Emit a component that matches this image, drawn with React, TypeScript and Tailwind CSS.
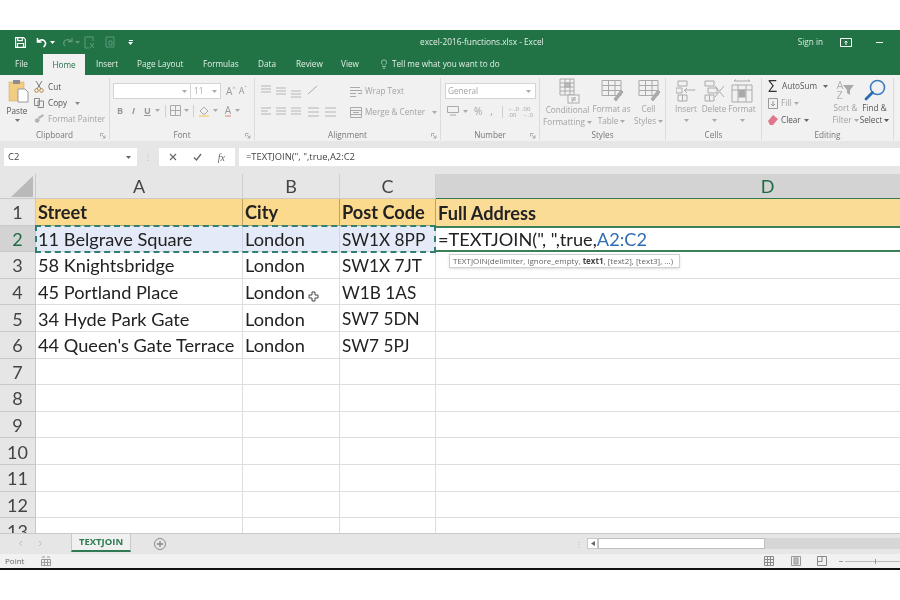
import { ReactNode } from 'react'
import { Lightbulb } from 'lucide-react'

const uiFont = 'font-["Open_Sans",sans-serif]'
const cellFont = 'font-["Lato",sans-serif]'

const rows: string[][] = [
  ['Street', 'City', 'Post Code', 'Full Address'],
  ['11 Belgrave Square', 'London', 'SW1X 8PP', '=TEXTJOIN'],
  ['58 Knightsbridge', 'London', 'SW1X 7JT', ''],
  ['45 Portland Place', 'London', 'W1B 1AS', ''],
  ['34 Hyde Park Gate', 'London', 'SW7 5DN', ''],
  ["44 Queen's Gate Terrace", 'London', 'SW7 5PJ', ''],
  ['', '', '', ''],
  ['', '', '', ''],
  ['', '', '', ''],
  ['', '', '', ''],
  ['', '', '', ''],
  ['', '', '', ''],
  ['', '', '', ''],
]

function Caret({ className = 'text-[#8a8a8a]' }: { className?: string }) {
  return (
    <svg width="5" height="3" viewBox="0 0 5 3" className={`shrink-0 ${className}`}>
      <path d="M0 0h5L2.500 3z" fill="currentColor" />
    </svg>
  )
}

function Group({ width, label, launcher, children }: { width: string; label: string; launcher?: boolean; children: ReactNode }) {
  return (
    <div className={`${width} flex flex-col border-r border-[#dcdcdc] h-[62px] relative`}>
      <div className="flex-1 flex min-h-0">{children}</div>
      <div className="h-[14px] text-[8.200px] leading-[18px] text-center text-[#777]">{label}</div>
      {launcher && (
        <svg width="6" height="6" viewBox="0 0 6 6" className="absolute right-[3px] bottom-[1px] text-[#999]">
          <path d="M.5.5h3M.5.5v3M2 2l3 3M5 2.500V5H2.500" stroke="currentColor" strokeWidth="0.8" fill="none" />
        </svg>
      )}
    </div>
  )
}

// the big two line ribbon buttons in Styles and Cells, caret marks a dropdown line
function BigButton({ width, icon, lines, dark }: { width: string; icon: ReactNode; lines: string[]; dark?: boolean }) {
  return (
    <div className={`${width} flex flex-col items-center text-[8.200px] leading-[12px] ${dark ? 'text-[#555]' : 'text-[#a3a3a3]'}`}>
      <div className="h-[28px] flex items-center justify-center">{icon}</div>
      {lines.map((l) => (
        <div key={l} className="h-[12px] whitespace-nowrap flex items-center gap-[2px]">
          {l.replace('^', '')}
          {l.endsWith('^') && <Caret className={dark ? 'text-[#555]' : 'text-[#aaa]'} />}
        </div>
      ))}
    </div>
  )
}

function TableIcon({ children }: { children?: ReactNode }) {
  return (
    <svg width="26" height="25" viewBox="0 0 26 25" fill="none" stroke="#a9a9a9" strokeWidth="1">
      <path d="M3 2.500h19v15H3zM3 7.500h19M3 12.500h19M9.500 2.500v15M16 2.500v15" />
      {children}
    </svg>
  )
}

function Sheet() {
  return (
    <div className="h-[359px] relative overflow-hidden bg-white">
      {/* column D runs past the window edge, that is why its letter sits so far right */}
      <div className={`grid grid-cols-[36px_207px_97px_96px_664px] grid-rows-[25px] auto-rows-[26.600px] w-[1100px] ${cellFont}`}>
        {/* column headers */}
        <div className="bg-[#e6e6e6] border-r border-b border-[#c9c9c9] flex items-end justify-end pr-[2px] pb-[1px]">
          <svg width="22" height="21" viewBox="0 0 22 21"><path d="M22 0v21H0z" fill="#b9b9b9" /></svg>
        </div>
        {['A', 'B', 'C', 'D'].map((c) => (
          <div
            key={c}
            className={`flex items-center justify-center text-[18px] pt-[1px] border-r border-[#cfcfcf] ${
              c === 'D' ? 'bg-[#d3d3d3] text-[#1f6b44] border-b border-b-[#2f7a52]' : 'bg-[#e6e6e6] text-[#444] border-b border-b-[#c9c9c9]'
            }`}
          >
            {c}
          </div>
        ))}

        {rows.map((r, i) => (
          <Row key={i} n={i + 1} cells={r} />
        ))}
      </div>

      {/* copy range marching ants */}
      <div className="absolute left-[35px] top-[51px] w-[401px] h-[28px] border-2 border-dashed border-[#2f7f73] pointer-events-none" />

      {/* argument tooltip */}
      <div className={`absolute left-[449px] top-[80px] h-[14px] w-[231px] bg-white border border-[#d0d0d0] shadow-sm text-[8px] leading-[12px] pl-[3px] text-[#666] whitespace-nowrap ${uiFont}`}>
        TEXTJOIN(delimiter, ignore_empty, <b className="text-[#444]">text1</b>, [text2], [text3], ...)
      </div>

      {/* plus cursor */}
      <svg width="11" height="11" viewBox="0 0 11 11" className="absolute left-[308px] top-[117px]">
        <path d="M4 1h3v3h3v3H7v3H4V7H1V4h3z" fill="#fff" stroke="#444" strokeWidth="1" />
      </svg>
    </div>
  )
}

function Row({ n, cells }: { n: number; cells: string[] }) {
  const header = n === 1
  const active = n === 2
  return (
    <>
      <div
        className={`flex items-center justify-center text-[18px] pt-[2px] border-r border-b border-[#c9c9c9] ${
          active ? 'bg-[#d3d3d3] text-[#1f6b44]' : 'bg-[#e6e6e6] text-[#444]'
        }`}
      >
        {n}
      </div>
      {cells.map((c, i) => {
        const isD = i === 3
        let cls = 'bg-white border-r border-b border-[#dedede] text-[#222]'
        if (header) cls = 'bg-[#fbd98d] border-r border-b border-[#b8a366] text-[#222] font-bold'
        if (active && !isD) cls = 'bg-[#e4eaf7] border-r border-b border-[#cfd6e6] text-[#222]'
        if (active && isD) cls = 'bg-white border-y-2 border-[#3a8058] text-[#222]'
        if (header && isD) cls = 'bg-[#fbdc97] text-[#222] font-bold'
        // the post codes run a little wide in this font
        const size = i === 2 && !header ? 'text-[17.200px]' : 'text-[18.200px]'
        return (
          <div key={i} className={`flex items-center pl-[2px] pt-[2px] ${size} whitespace-nowrap overflow-hidden ${cls}`}>
            {active && isD ? (
              <span>
                =TEXTJOIN(", ",true,<span className="text-[#2f6db5]">A2:C2</span>
              </span>
            ) : (
              c
            )}
          </div>
        )
      })}
    </>
  )
}

export default function App() {
  return (
    <div className={`w-[900px] h-[600px] overflow-hidden bg-white flex flex-col blur-[0.3px] ${uiFont}`}>
      <div className="h-[30px] shrink-0" />

      {/* title bar */}
      <div className="h-[24px] bg-[#217346] flex items-center text-white relative">
        <svg width="11" height="11" viewBox="0 0 11 11" className="ml-[15px]" fill="none" stroke="#fff" strokeWidth="1.200">
          <path d="M.6.6h8l1.800 1.800v8H.6zM2.800.6v3h4.500v-3M2.500 10.400V6.500h6v3.900" />
        </svg>
        <svg width="12" height="11" viewBox="0 0 12 11" className="ml-[10px]" fill="none" stroke="#fff" strokeWidth="1.600">
          <path d="M1.500 1v4h4M1.800 4.800C3 3 6.500 2 8.500 4s1 4.500-1 6" />
        </svg>
        <Caret className="text-white ml-[2px]" />
        <svg width="11" height="10" viewBox="0 0 11 10" className="ml-[7px]" fill="none" stroke="#5d9a78" strokeWidth="1.300">
          <path d="M10 1v3.500H6M9.500 4.500C8 2.500 5 2 3 3.500S1.500 7.500 3 9" />
        </svg>
        <Caret className="text-[#5d9a78] ml-[2px]" />
        <svg width="11" height="13" viewBox="0 0 11 13" className="ml-[4px]" fill="none" stroke="#5d9a78" strokeWidth="1">
          <path d="M1 1h8v4M1 1v11h4" />
          <path d="M6 7l4 5M10 7l-4 5" />
        </svg>
        <svg width="11" height="13" viewBox="0 0 11 13" className="ml-[10px]" fill="none" stroke="#5d9a78" strokeWidth="1">
          <path d="M1 1h8v10H1zM4 5h3v4H4z" />
        </svg>
        <div className="ml-[12px] flex flex-col items-center gap-[1px]">
          <div className="w-[4px] h-[1px] bg-white" />
          <Caret className="text-white" />
        </div>
        <div className="absolute left-[420px] text-[8.300px] text-[#e4efe8] whitespace-nowrap">excel-2016-functions.xlsx - Excel</div>
        <div className="ml-auto text-[8.200px] mr-[17px] text-[#dcebe2]">Sign in</div>
        <svg width="12" height="9" viewBox="0 0 12 9" className="mr-[24px]" fill="none" stroke="#fff" strokeWidth="1">
          <path d="M.5.5h11v8H.5zM6 7V3M4.500 4.500L6 3l1.500 1.500" />
        </svg>
        <div className="w-[7px] h-[1px] bg-white mr-[17px]" />
      </div>

      {/* ribbon tabs */}
      <div className="h-[21px] bg-[#217346] flex items-end text-[8.200px] text-[#e4efe8]">
        <div className="ml-[15px] w-[28px] h-[21px] leading-[20px]">File</div>
        <div className="w-[42px] h-[21px] bg-[#f1f1f1] text-[#217346] text-center leading-[22px]">Home</div>
        <div className="ml-[11px] w-[41px] h-[21px] leading-[20px]">Insert</div>
        <div className="w-[66px] h-[21px] leading-[20px]">Page Layout</div>
        <div className="w-[55px] h-[21px] leading-[20px]">Formulas</div>
        <div className="w-[38px] h-[21px] leading-[20px]">Data</div>
        <div className="w-[45px] h-[21px] leading-[20px]">Review</div>
        <div className="w-[38px] h-[21px] leading-[20px]">View</div>
        <div className="h-[21px] flex items-center gap-[3px] pb-[1px]">
          <Lightbulb size={10} strokeWidth={1.500} />
          <span>Tell me what you want to do</span>
        </div>
      </div>

      {/* ribbon */}
      <div className="h-[66px] bg-[#f1f1f1] flex pt-[3px] text-[8.200px] overflow-hidden">
        <Group width="w-[110px]" label="Clipboard" launcher>
          <div className="w-[34px] flex flex-col items-center text-[#555]">
            <svg width="22" height="24" viewBox="0 0 22 24" className="mt-[1px] ml-[3px]">
              <rect x="1" y="3" width="15" height="19" fill="#f2cc80" stroke="#c9a961" strokeWidth="0.5" />
              <rect x="5" y="1" width="7" height="4" fill="#8d8d8d" />
              <path d="M10 10h7l3 3v10H10z" fill="#fff" stroke="#9a9a9a" />
            </svg>
            <div className="leading-[11px] mt-[2px]">Paste</div>
            <Caret className="text-[#777] mt-[3px]" />
          </div>
          <div className="flex flex-col pt-[1px] leading-[16px]">
            <div className="flex items-center gap-[4px] text-[#555]">
              <svg width="10" height="12" viewBox="0 0 10 12" fill="none" stroke="#777"><path d="M2 0l5 8M8 0L3 8" /><circle cx="2.500" cy="9.500" r="1.800" stroke="#b8863c" /><circle cx="7.500" cy="9.500" r="1.800" stroke="#b8863c" /></svg>
              Cut
            </div>
            <div className="flex items-center gap-[4px] text-[#555]">
              <svg width="10" height="10" viewBox="0 0 10 10" fill="none" stroke="#888"><path d="M.5.5h5v7h-5zM4 3h5.500v6.500H4z" fill="#f1f1f1" /></svg>
              Copy <Caret className="ml-[4px] text-[#888]" />
            </div>
            <div className="flex items-center gap-[4px] text-[#a3a3a3] whitespace-nowrap">
              <svg width="10" height="10" viewBox="0 0 10 10" fill="#b5b5b5"><path d="M4 3l5-3 1 2-5 3zM1 5l3-1 2 2-2 3-3-1z" /></svg>
              Format Painter
            </div>
          </div>
        </Group>

        <Group width="w-[145px]" label="Font" launcher>
          <div className="flex flex-col pl-[3px] pt-[5px] gap-[5px] text-[#999]">
            <div className="flex items-center">
              <div className="w-[78px] h-[16px] bg-white border border-[#d4d4d4] flex items-center justify-end pr-[3px]"><Caret className="text-[#aaa]" /></div>
              <div className="w-[30px] h-[16px] bg-white border-y border-r border-[#d4d4d4] flex items-center justify-between px-[3px] text-[#aaa]">11<Caret className="text-[#aaa]" /></div>
              <span className="ml-[5px] text-[10px]">A</span><span className="text-[6px] -mt-[5px]">^</span>
              <span className="ml-[3px] text-[9px]">A</span><span className="text-[6px] -mt-[5px]">ˇ</span>
            </div>
            <div className="flex items-center font-bold text-[9px] pl-[4px]">
              <span>B</span>
              <span className="ml-[9px] italic">I</span>
              <span className="ml-[9px] underline">U</span>
              <Caret className="ml-[4px] text-[#aaa]" />
              <div className="w-px h-[12px] bg-[#d0d0d0] ml-[5px]" />
              <svg width="11" height="11" viewBox="0 0 11 11" className="ml-[4px]" fill="none" stroke="#aaa"><path d="M.5.5h10v10H.5zM5.500.5v10M.5 5.500h10" /></svg>
              <Caret className="ml-[3px] text-[#aaa]" />
              <div className="w-px h-[12px] bg-[#d0d0d0] ml-[4px]" />
              <svg width="11" height="12" viewBox="0 0 11 12" className="ml-[5px]"><path d="M1 6l4-4 4 4-3 3H4z" fill="none" stroke="#aaa" /><rect x="0" y="10" width="10" height="2" fill="#f0dca0" /></svg>
              <Caret className="ml-[3px] text-[#aaa]" />
              <span className="ml-[7px] font-normal text-[10px] border-b-2 border-[#e8b9b9] leading-[10px]">A</span>
              <Caret className="ml-[4px] text-[#aaa]" />
            </div>
          </div>
        </Group>

        <Group width="w-[186px]" label="Alignment" launcher>
          <div className="flex flex-col pl-[6px] pt-[5px] gap-[6px]">
            <svg width="60" height="16" viewBox="0 0 60 16" fill="none" stroke="#b5b5b5"><path d="M0 3h10M0 6h10M0 9h10M15 5h10M15 8h10M15 11h10M30 8h10M30 11h10M30 14h10" /><path d="M47 11l9-8" stroke="#aaa" /></svg>
            <svg width="78" height="14" viewBox="0 0 78 14" fill="none" stroke="#b5b5b5"><path d="M0 3h10M0 6h7M0 9h10M15 3h10M15 6h10M15 9h10M30 3h10M30 6h10M30 9h10M47 3h11M47 7h11M47 11h11M64 3h11M64 7h11M64 11h11" /></svg>
          </div>
          <div className="flex flex-col pl-[11px] pt-[5px] gap-[5px] text-[#a3a3a3] leading-[16px]">
            <div className="flex items-center gap-[3px] whitespace-nowrap">
              <svg width="12" height="11" viewBox="0 0 12 11" fill="none" stroke="#aaa"><path d="M0 1.500h10M0 4.500h12M0 7.500h6M0 10.500h6M12 4.500v3H8" /></svg>
              Wrap Text
            </div>
            <div className="flex items-center gap-[3px] whitespace-nowrap">
              <svg width="12" height="11" viewBox="0 0 12 11" fill="none" stroke="#aaa"><path d="M.5.5h11v10H.5zM.5 3.500h11M.5 7.500h11M3 5.500h6" /></svg>
              Merge &amp; Center <Caret className="ml-[4px] text-[#aaa]" />
            </div>
          </div>
        </Group>

        <Group width="w-[99px]" label="Number" launcher>
          <div className="flex flex-col pl-[4px] pt-[5px] gap-[5px] text-[#a3a3a3]">
            <div className="w-[91px] h-[16px] bg-white border border-[#d4d4d4] flex items-center justify-between px-[2px]">General<Caret className="text-[#aaa] mr-[2px]" /></div>
            <div className="flex items-center pl-[2px] text-[10px]">
              <svg width="12" height="11" viewBox="0 0 12 11" fill="none" stroke="#aaa"><path d="M.5.5h11v6H.5zM3 9h6" /></svg>
              <Caret className="ml-[4px] text-[#aaa]" />
              <span className="ml-[6px]">%</span>
              <span className="ml-[8px]">,</span>
              <div className="w-px h-[12px] bg-[#d0d0d0] ml-[9px]" />
              <span className="ml-[5px] text-[6px] leading-[6px] whitespace-pre">{'←.0\n.00'}</span>
              <span className="ml-[3px] text-[6px] leading-[6px] whitespace-pre">{'.00\n→.0'}</span>
            </div>
          </div>
        </Group>

        <Group width="w-[126px]" label="Styles">
          <div className="flex pl-[4px]">
            <BigButton
              width="w-[47px]"
              lines={['Conditional', 'Formatting^']}
              icon={
                <svg width="24" height="26" viewBox="0 0 24 26" fill="none" stroke="#aaa">
                  <path d="M4 1h14v16H4zM4 5h14M4 9h14M4 13h14M9 1v16M14 1v16" />
                  <rect x="9" y="5" width="5" height="4" fill="#bbb" />
                  <rect x="12" y="17" width="11" height="8" fill="#f4f4f4" />
                  <path d="M15 20h5M15 22h5M19 19l-3 5" />
                </svg>
              }
            />
            <BigButton width="w-[41px]" lines={['Format as', 'Table^']} icon={<TableIcon><path d="M15 21l7-9 2 2-7 9z" fill="#aaa" /></TableIcon>} />
            <BigButton width="w-[33px]" lines={['Cell', 'Styles^']} icon={<TableIcon><path d="M15 21l7-9 2 2-7 9z" fill="#aaa" /></TableIcon>} />
          </div>
        </Group>

        <Group width="w-[96px]" label="Cells">
          <div className="flex pl-[6px]">
            <BigButton
              width="w-[28px]"
              lines={['Insert', '^']}
              icon={
                <svg width="20" height="22" viewBox="0 0 20 22" fill="none" stroke="#aaa">
                  <path d="M2 1h9v5H2zM0 8h6v5H0zM2 15h9v6H2zM6.500 15v6M8 10h11v-.5M11 8l-2.500 2.500L11 13" />
                </svg>
              }
            />
            <BigButton
              width="w-[28px]"
              lines={['Delete', '^']}
              icon={
                <svg width="22" height="22" viewBox="0 0 22 22" fill="none" stroke="#aaa">
                  <path d="M2 1h9v5H2zM5 8h9v5H5zM2 15h9v6H2zM6.500 15v6M12 6l9 11M21 6l-9 11" />
                </svg>
              }
            />
            <BigButton
              width="w-[28px]"
              lines={['Format', '^']}
              icon={
                <svg width="22" height="24" viewBox="0 0 22 24" fill="none" stroke="#aaa">
                  <path d="M1 6h20v17H1zM1 11h20M7 6v17M15 6v17M3 2h16M3 2l2-1.500M19 2l-2-1.500" />
                  <rect x="8" y="11" width="6" height="7" fill="#aaa" />
                </svg>
              }
            />
          </div>
        </Group>

        <Group width="w-[132px]" label="Editing">
          <div className="flex pl-[6px]">
            <div className="w-[64px] flex flex-col leading-[16px]">
              <div className="flex items-center gap-[2px] text-[#555] whitespace-nowrap">
                <span className="w-[12px] text-[16px] leading-[16px] text-[#333]">Σ</span>AutoSum <Caret className="ml-[4px] text-[#666]" />
              </div>
              <div className="flex items-center gap-[3px] text-[#a3a3a3] mt-[1px]">
                <svg width="10" height="11" viewBox="0 0 10 11" fill="none" stroke="#999"><path d="M.5.500h9v10h-9zM5 3v5M3 6l2 2 2-2" /></svg>
                Fill <Caret className="text-[#aaa]" />
              </div>
              <div className="flex items-center gap-[3px] text-[#555] mt-[1px]">
                <svg width="10" height="10" viewBox="0 0 10 10"><path d="M0 6l5-6 5 4-5 6H2z" fill="#e0788c" /></svg>
                Clear <Caret className="text-[#666]" />
              </div>
            </div>
            <BigButton
              width="w-[27px]"
              lines={['Sort &', 'Filter^']}
              icon={
                <div className="flex items-center text-[#b0b0b0]">
                  <span className="text-[11px] leading-[10px] whitespace-pre">{'A\nZ'}</span>
                  <svg width="11" height="10" viewBox="0 0 11 10"><path d="M0 0h11L7 5v5L4 8V5z" fill="#a9a9a9" /></svg>
                </div>
              }
            />
            <BigButton
              width="w-[31px]"
              dark
              lines={['Find &', 'Select^']}
              icon={
                <svg width="22" height="22" viewBox="0 0 22 22" fill="none">
                  <circle cx="13.500" cy="8.500" r="7" stroke="#3b7bc0" strokeWidth="1.600" />
                  <path d="M8.500 13.500L2 20" stroke="#2b6cb0" strokeWidth="2.800" strokeLinecap="round" />
                </svg>
              }
            />
          </div>
        </Group>
      </div>

      {/* formula bar */}
      <div className="h-[33px] bg-[#e6e6e6] flex items-start pt-[7px] text-[9.400px] text-[#444]">
        <div className="ml-[4px] w-[133px] h-[18px] bg-white flex items-center justify-between px-[4px]">
          C2
          <Caret className="text-[#666] mr-[2px]" />
        </div>
        <div className="w-[22px] h-[18px] flex items-center justify-center text-[#bbb] text-[8px]">⋮</div>
        <div className="w-[76px] h-[18px] bg-white flex items-center justify-around px-[2px] text-[#666]">
          <svg width="8" height="8" viewBox="0 0 8 8" fill="none" stroke="#666" strokeWidth="1.100"><path d="M1 1l6 6M7 1L1 7" /></svg>
          <svg width="9" height="8" viewBox="0 0 9 8" fill="none" stroke="#666" strokeWidth="1.300"><path d="M1 4.500L3.500 7 8 1" /></svg>
          <span className="font-['Liberation_Serif',serif] italic text-[10px]">fx</span>
        </div>
        <div className="ml-[4px] flex-1 h-[18px] bg-white flex items-center pl-[7px]">=TEXTJOIN(", ",true,A2:C2</div>
      </div>

      <Sheet />

      {/* sheet tabs */}
      <div className="h-[21px] bg-[#e6e6e6] border-t border-[#c9c9c9] flex items-start relative z-10">
        <svg width="3" height="5" viewBox="0 0 3 5" className="ml-[19px] mt-[7px]" fill="none" stroke="#bbb"><path d="M3 0L.5 2.500 3 5" /></svg>
        <svg width="3" height="5" viewBox="0 0 3 5" className="ml-[17px] mt-[7px]" fill="none" stroke="#bbb"><path d="M0 0l2.500 2.500L0 5" /></svg>
        <div className="ml-[29px] w-[60px] h-[18px] bg-[#f0f0f0] border-x border-[#c9c9c9] border-b-2 border-b-[#2f7a52] text-[9.500px] font-bold text-[#2f7a52] text-center leading-[16px]">TEXTJOIN</div>
        <svg width="12" height="12" viewBox="0 0 12 12" className="ml-[23px] mt-[4px]" fill="none" stroke="#888"><circle cx="6" cy="6" r="5.500" /><path d="M3 6h6M6 3v6" strokeWidth="1.300" /></svg>
        <div className="absolute left-[575px] top-[5px] text-[#bbb] text-[8px] leading-[10px]">⋮</div>
        <div className="absolute left-[587px] top-[4px] right-0 h-[11px] bg-[#d6d6d6] flex">
          <div className="w-[11px] h-[11px] bg-white border border-[#c9c9c9] flex items-center justify-center">
            <svg width="4" height="5" viewBox="0 0 4 5"><path d="M4 0v5L0 2.500z" fill="#666" /></svg>
          </div>
          <div className="w-[167px] h-[11px] bg-white border border-[#c0c0c0]" />
        </div>
      </div>

      {/* status bar */}
      <div className="h-[14px] bg-[#f1f1f1] flex items-center text-[8px] text-[#666]">
        <span className="ml-[5px]">Point</span>
        <svg width="10" height="10" viewBox="0 0 10 10" className="ml-[17px]" fill="none" stroke="#999"><path d="M.5 3.500h9v6h-9zM3.500 3.500v6M6.500 3.500v6M.5 6.500h9" /><path d="M1 1h3M6 1h3" /></svg>
        <svg width="10" height="10" viewBox="0 0 10 10" className="ml-[713px]" fill="none" stroke="#888"><path d="M.5.5h9v9h-9zM3.500.5v9M6.500.5v9M.5 3.500h9M.5 6.500h9" /></svg>
        <svg width="10" height="10" viewBox="0 0 10 10" className="ml-[17px]" fill="none" stroke="#999"><path d="M.5.5h9v9h-9z" /><rect x="3" y="2" width="4" height="6" fill="#bbb" /></svg>
        <svg width="10" height="10" viewBox="0 0 10 10" className="ml-[16px]" fill="none" stroke="#888"><path d="M.5.5h9v9h-9zM5 .5v5H.5" /></svg>
        <div className="ml-[12px] w-[4px] h-px bg-[#999]" />
        <div className="ml-[2px] flex-1 h-px bg-[#bbb] relative">
          <div className="absolute left-[30px] -top-[2px] w-px h-[5px] bg-[#999]" />
        </div>
      </div>

      <div className="h-[2px] bg-[#111]" />
    </div>
  )
}
